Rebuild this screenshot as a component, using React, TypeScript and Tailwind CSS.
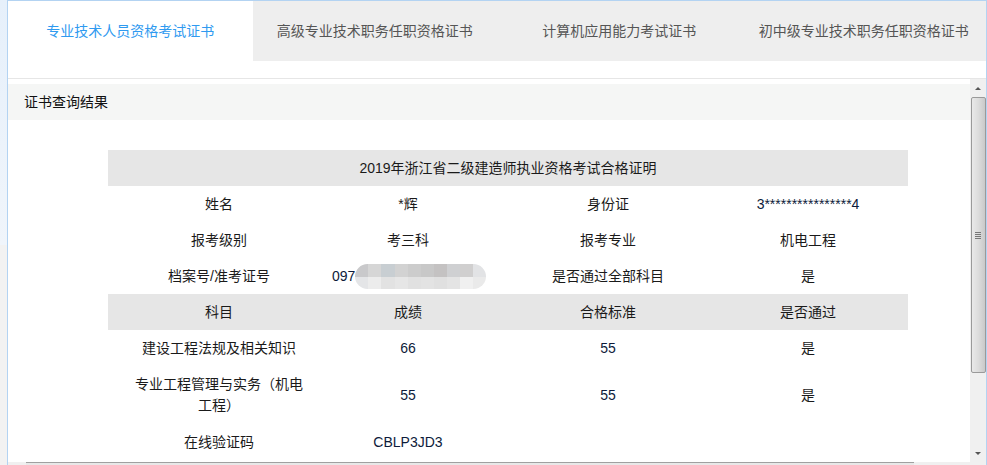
import React from 'react';

const FONT = "font-['Liberation_Sans','Noto_Sans_CJK_SC',sans-serif]";

const TABS = ['专业技术人员资格考试证书', '高级专业技术职务任职资格证书', '计算机应用能力考试证书', '初中级专业技术职务任职资格证书'];

const ROW = 'grid grid-cols-[222px_156px_244px_156px_1fr] items-center text-center text-[14px] text-[#1a1a1a]';

function Cell({ children, className = '' }: { children?: React.ReactNode; className?: string }) {
  return <div className={`px-[22px] leading-[21px] ${className}`}>{children}</div>;
}

// mosaic pill covering the hidden part of the 准考证号
function Mosaic() {
  const top = ['#c9c9cb', '#d6d6d6', '#c8ced2', '#d2d2d2', '#cccccc', '#c8c8c8', '#c4c2c2', '#cfd0d2', '#d0cfcf', '#e2e3e5'];
  const bottom = ['#e4e5e7', '#ececec', '#e2e2e2', '#e6e6e6', '#e1e1e1', '#e3e3e3', '#e0e0e0', '#e4e4e4', '#f0f0f0', '#eaeaea'];
  return (
    <span className="inline-flex flex-col w-[136px] h-[25px] rounded-full overflow-hidden align-middle">
      <span className="flex h-[13px]">{top.map((c, i) => <span key={i} className="flex-1" style={{ background: c }} />)}</span>
      <span className="flex h-[12px]">{bottom.map((c, i) => <span key={i} className="flex-1" style={{ background: c }} />)}</span>
    </span>
  );
}

function Scrollbar() {
  return (
    <div className="w-[16px] shrink-0 bg-[#f0f0f0] flex flex-col items-center">
      <div className="h-[18px] flex items-center justify-center">
        <div className="w-0 h-0 border-l-[3px] border-r-[3px] border-b-[3px] border-l-transparent border-r-transparent border-b-[#555]" />
      </div>
      <div className="w-[15px] h-[276px] rounded-[2px] border border-[#9a9a9a] bg-gradient-to-r from-[#e9e9e9] via-[#dcdcdc] to-[#c9c9c9] flex flex-col items-center justify-center gap-[1px]">
        <div className="w-[6px] h-[1px] bg-[#777]" />
        <div className="w-[6px] h-[1px] bg-[#777]" />
        <div className="w-[6px] h-[1px] bg-[#777]" />
        <div className="w-[6px] h-[1px] bg-[#777]" />
      </div>
      <div className="flex-1" />
      <div className="h-[18px] flex items-center justify-center">
        <div className="w-0 h-0 border-l-[3px] border-r-[3px] border-t-[3px] border-l-transparent border-r-transparent border-t-[#555]" />
      </div>
    </div>
  );
}

export default function App() {
  return (
    <div className={`w-[987px] h-[465px] flex bg-[#f2f2f2] overflow-hidden ${FONT}`}>
      {/* outer page strip */}
      <div className="w-[7px] shrink-0 flex flex-col">
        <div className="h-[245px] bg-gradient-to-b from-[#e6f0fb] to-[#f0f5fb]" />
        <div className="flex-1 bg-[#f2f2f2]" />
      </div>

      <div className="flex-1 flex flex-col border-t border-l border-r border-[#b3d3f2] bg-white">
        {/* tabs */}
        <div className="h-[60px] flex">
          {TABS.map((t, i) => (
            <div
              key={t}
              className={`flex-1 flex items-center justify-center text-[14px] ${i === 0 ? 'bg-white text-[#2f9af0]' : 'bg-[#eeeeee] text-[#555]'}`}
            >
              {t}
            </div>
          ))}
        </div>
        <div className="h-[18px] border-b border-[#e6e6e6]" />

        <div className="flex-1 flex min-h-0">
          <div className="flex-1 pt-[5px]">
            <div className="h-[36px] bg-[#f5f6f5] flex items-center pl-[16px] text-[14px] text-[#111]">证书查询结果</div>

            <div className="ml-[100px] mt-[30px] w-[800px]">
              <div className="h-[36px] bg-[#e6e6e6] flex items-center justify-center text-[14px] text-[#1a1a1a]">
                2019年浙江省二级建造师执业资格考试合格证明
              </div>
              <div className={`${ROW} h-[36px]`}>
                <Cell>姓名</Cell>
                <Cell>*辉</Cell>
                <Cell>身份证</Cell>
                <Cell className="text-[#0d1b3a]">3****************4</Cell>
              </div>
              <div className={`${ROW} h-[36px]`}>
                <Cell>报考级别</Cell>
                <Cell>考三科</Cell>
                <Cell>报考专业</Cell>
                <Cell>机电工程</Cell>
              </div>
              <div className={`${ROW} h-[36px]`}>
                <Cell>档案号/准考证号</Cell>
                <div className="flex items-center whitespace-nowrap pl-[2px] text-[#0d1b3a]">
                  097<Mosaic />
                </div>
                <Cell>是否通过全部科目</Cell>
                <Cell>是</Cell>
              </div>
              <div className={`${ROW} h-[36px] bg-[#e6e6e6]`}>
                <Cell>科目</Cell>
                <Cell>成绩</Cell>
                <Cell>合格标准</Cell>
                <Cell>是否通过</Cell>
              </div>
              <div className={`${ROW} h-[36px]`}>
                <Cell>建设工程法规及相关知识</Cell>
                <Cell className="text-[#0d1b3a]">66</Cell>
                <Cell className="text-[#0d1b3a]">55</Cell>
                <Cell>是</Cell>
              </div>
              <div className={`${ROW} h-[58px]`}>
                <Cell>专业工程管理与实务（机电工程）</Cell>
                <Cell className="text-[#0d1b3a]">55</Cell>
                <Cell className="text-[#0d1b3a]">55</Cell>
                <Cell>是</Cell>
              </div>
              <div className={`${ROW} h-[36px]`}>
                <Cell>在线验证码</Cell>
                <Cell className="text-[#0d1b3a]">CBLP3JD3</Cell>
                <Cell />
                <Cell />
              </div>
            </div>
          </div>
          <Scrollbar />
        </div>

        {/* horizontal scrollbar edge */}
        <div className="h-[3px] bg-[#f0f0f0] flex">
          <div className="w-[18px]" />
          <div className="w-[888px] border-t border-[#a0a0a0] bg-[#e8e8e8]" />
        </div>
      </div>
    </div>
  );
}
